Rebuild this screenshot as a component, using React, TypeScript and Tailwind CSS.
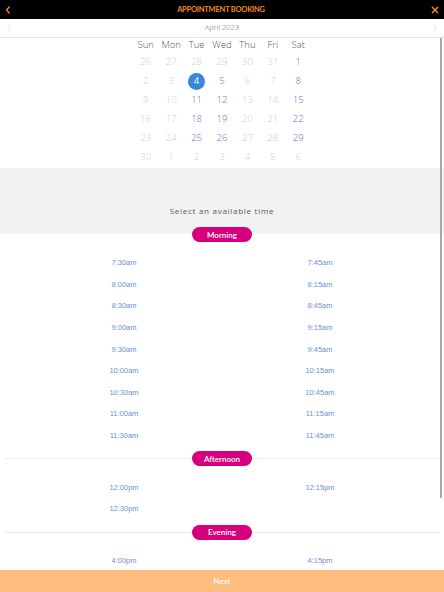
import React from "react";

const weekdays = ["Sun", "Mon", "Tue", "Wed", "Thu", "Fri", "Sat"];
type Day = { n: number; s: "off" | "on" | "sel" };
const weeks: Day[][] = [
  [26, 27, 28, 29, 30, 31].map((n) => ({ n, s: "off" as const })).concat([{ n: 1, s: "on" }]),
  [
    { n: 2, s: "off" }, { n: 3, s: "off" }, { n: 4, s: "sel" }, { n: 5, s: "on" },
    { n: 6, s: "off" }, { n: 7, s: "off" }, { n: 8, s: "on" },
  ],
  [
    { n: 9, s: "off" }, { n: 10, s: "off" }, { n: 11, s: "on" }, { n: 12, s: "on" },
    { n: 13, s: "off" }, { n: 14, s: "off" }, { n: 15, s: "on" },
  ],
  [
    { n: 16, s: "off" }, { n: 17, s: "off" }, { n: 18, s: "on" }, { n: 19, s: "on" },
    { n: 20, s: "off" }, { n: 21, s: "off" }, { n: 22, s: "on" },
  ],
  [
    { n: 23, s: "off" }, { n: 24, s: "off" }, { n: 25, s: "on" }, { n: 26, s: "on" },
    { n: 27, s: "off" }, { n: 28, s: "off" }, { n: 29, s: "on" },
  ],
  [30, 1, 2, 3, 4, 5, 6].map((n) => ({ n, s: "off" as const })),
];

const morning = [
  ["7:30am", "7:45am"], ["8:00am", "8:15am"], ["8:30am", "8:45am"], ["9:00am", "9:15am"],
  ["9:30am", "9:45am"], ["10:00am", "10:15am"], ["10:30am", "10:45am"], ["11:00am", "11:15am"],
  ["11:30am", "11:45am"],
];
const afternoon = [["12:00pm", "12:15pm"], ["12:30pm", ""]];
const evening = [["4:00pm", "4:15pm"]];

function Pill({ label }: { label: string }) {
  return (
    <div className="w-[60px] h-[15px] rounded-full bg-[#d6007d] flex items-center justify-center text-white text-[8px] font-semibold font-['Lato',sans-serif] shrink-0">
      {label}
    </div>
  );
}

function Divider({ label }: { label: string }) {
  return (
    <div className="flex items-center h-[15px] px-[4px]">
      <div className="flex-1 h-px bg-[#eeeeee]" />
      <Pill label={label} />
      <div className="flex-1 h-px bg-[#eeeeee]" />
    </div>
  );
}

function Times({ rows }: { rows: string[][] }) {
  return (
    <div className="w-[392px] mx-auto grid grid-cols-2 pt-[10px] pb-[5px]">
      {rows.map((r, i) => (
        <React.Fragment key={i}>
          {r.map((t, j) => (
            <div
              key={j}
              className="h-[21.6px] flex items-center justify-center text-[7.5px] text-[#7090d4] font-['Liberation_Sans',sans-serif]"
            >
              {t}
            </div>
          ))}
        </React.Fragment>
      ))}
    </div>
  );
}

export default function App() {
  return (
    <div className="relative w-[444px] h-[592px] bg-white flex flex-col overflow-hidden font-['Open_Sans',sans-serif]">
      <div className="h-[19px] bg-black flex items-center justify-between px-[4px] shrink-0">
        <svg width="8" height="10" viewBox="0 0 8 10">
          <path d="M5.5 1.5 L2.5 5 L5.5 8.5" stroke="#f08a1c" strokeWidth="1.3" fill="none" />
        </svg>
        <span className="text-[7.5px] font-bold text-[#f08a1c] font-['Lato',sans-serif] tracking-[-0.03em]">
          APPOINTMENT BOOKING
        </span>
        <svg width="10" height="10" viewBox="0 0 10 10">
          <path d="M2 2 L8 8 M8 2 L2 8" stroke="#f08a1c" strokeWidth="1.5" fill="none" />
        </svg>
      </div>

      <div className="flex-1 overflow-hidden">
        <div className="h-[19px] flex items-center justify-between px-[6px] border-b border-[#e6e6e6]">
          <svg width="6" height="9" viewBox="0 0 6 9">
            <path d="M4.5 1 L1.5 4.5 L4.5 8" stroke="#dcdcdc" strokeWidth="0.9" fill="none" />
          </svg>
          <span className="text-[7.5px] text-[#666] font-light">April 2023</span>
          <svg width="6" height="9" viewBox="0 0 6 9">
            <path d="M1.5 1 L4.5 4.5 L1.5 8" stroke="#dcdcdc" strokeWidth="0.9" fill="none" />
          </svg>
        </div>

        <div className="w-[178px] mx-auto font-light">
          <div className="grid grid-cols-7 h-[15px] items-center">
            {weekdays.map((d) => (
              <div key={d} className="text-center text-[9.5px] text-[#555]">
                {d}
              </div>
            ))}
          </div>
          {weeks.map((w, i) => (
            <div key={i} className="grid grid-cols-7 h-[19px] items-center">
              {w.map((d, j) => (
                <div key={j} className="flex items-center justify-center">
                  {d.s === "sel" ? (
                    <div className="w-[17.5px] h-[17.5px] rounded-full bg-[#3a86d8] text-white text-[9.5px] font-normal flex items-center justify-center">
                      {d.n}
                    </div>
                  ) : (
                    <span
                      className={
                        d.s === "on"
                          ? "text-[9.5px] text-[#5c78c4]"
                          : "text-[9.5px] text-[#cfcfcf]"
                      }
                    >
                      {d.n}
                    </span>
                  )}
                </div>
              ))}
            </div>
          ))}
        </div>

        <div className="h-[59px] bg-[#f2f2f2] mt-[1px] pt-[37px] text-center">
          <div className="text-[8px] leading-[12px] text-[#555] tracking-[0.09em]">
            Select an available time
          </div>
        </div>
        <div className="h-[15px] flex justify-center bg-[linear-gradient(to_bottom,#f2f2f2_50%,#ffffff_50%)]">
          <Pill label="Morning" />
        </div>
        <Times rows={morning} />
        <Divider label="Afternoon" />
        <Times rows={afternoon} />
        <Divider label="Evening" />
        <Times rows={evening} />
      </div>

      <div className="h-[22px] bg-[#ffbd80] flex items-center justify-center text-white text-[8px] font-['Lato',sans-serif] shrink-0">
        Next
      </div>

      <div className="absolute left-[440px] top-[38px] w-[2px] h-[460px] bg-[#a8a8a8]" />
    </div>
  );
}
